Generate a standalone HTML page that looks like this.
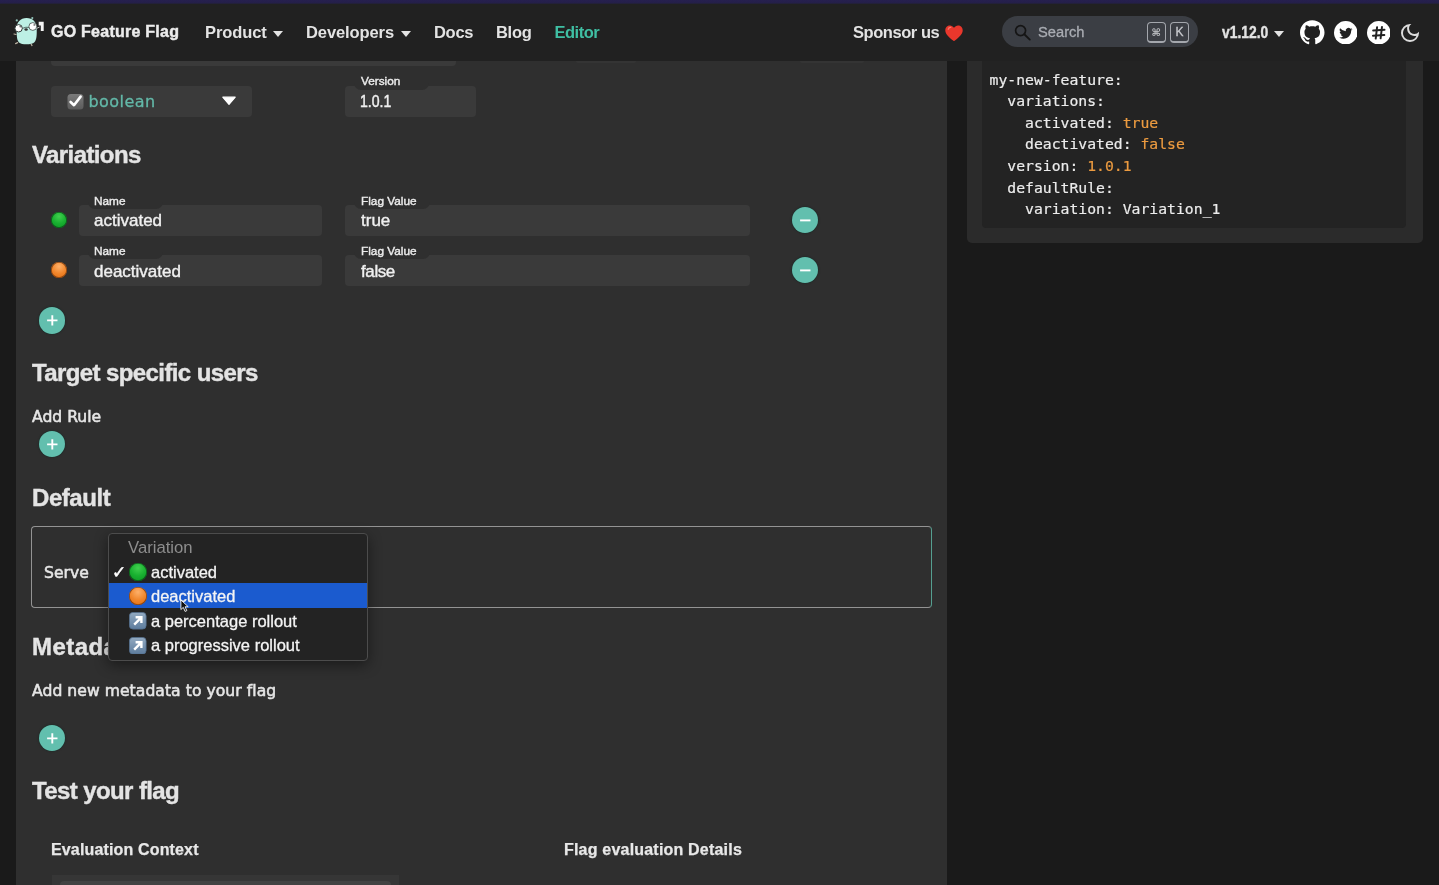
<!DOCTYPE html>
<html lang="en">
<head>
<meta charset="utf-8">
<title>GO Feature Flag - Editor</title>
<style>
*{box-sizing:border-box;margin:0;padding:0}
html,body{width:1439px;height:885px;overflow:hidden;background:#1b1b1b}
body{position:relative;font-family:"Liberation Sans",sans-serif;color:#e6e6e6}
.t{position:absolute;white-space:nowrap;line-height:1;transform:translateZ(0)}
.abs{position:absolute}
/* top strip + navbar */
#strip{left:0;top:0;width:1439px;height:4px;background:linear-gradient(#26204e 0,#251f4b 60%,#222132 100%);z-index:2}
#nav{left:0;top:3px;width:1439px;height:58px;background:#212121}
.navlink{font-weight:bold;font-size:16.5px;color:#e3e3e3;letter-spacing:-0.1px}
.caret{position:absolute;width:0;height:0;border-left:5.5px solid transparent;border-right:5.5px solid transparent;border-top:6px solid #e3e3e3}
/* main */
#gutter{left:0;top:61px;width:16px;height:824px;background:#1a1a1a}
#panel{left:16px;top:61px;width:931px;height:824px;background:#2f2f2f}
#right{left:947px;top:61px;width:492px;height:824px;background:#1a1a1a}
#card{left:967px;top:61px;width:456px;height:182px;background:#2b2b2b;border-radius:0 0 5px 5px}
#code{left:982px;top:61px;width:424px;height:167px;background:#232323;border-radius:0 0 4px 4px}
pre{position:absolute;left:989.5px;top:68.7px;-webkit-text-stroke:0.2px;font-family:"DejaVu Sans Mono","Liberation Mono",monospace;font-size:14.75px;line-height:21.6px;color:#ececec;transform:translateZ(0)}
pre b{font-weight:normal;color:#ec9b40}
.inp{position:absolute;background:#3a3a3a;border-radius:4px}
.lbl{font-size:11.8px;color:#ececec;-webkit-text-stroke:0.4px #ececec}
.notch{position:absolute;height:8px;background:#2f2f2f;border-radius:0 0 7px 7px}
.val{font-size:17px;color:#f0f0f0;-webkit-text-stroke:0.4px #f0f0f0}
h2.t{font-size:24px;font-weight:bold;color:#e4e4e4;letter-spacing:-0.6px;-webkit-text-stroke:0.4px #e4e4e4}
.pop{font-size:15.6px;color:#e6e6e6;-webkit-text-stroke:0.55px #e6e6e6;font-family:"DejaVu Sans",sans-serif}
.btn svg{position:absolute;left:0;top:0}
.btn{position:absolute;width:26.6px;height:26.6px;border-radius:50%;background:#62bfae;box-shadow:0 0 1.5px 0.5px rgba(10,40,35,.55)}
.btn i{position:absolute;left:8.1px;top:12.6px;width:10.4px;height:1.8px;background:#fff;border-radius:1px}
.btn i.v{left:12.4px;top:8.3px;width:1.8px;height:10.4px}
.dot{position:absolute;width:16px;height:16px;border-radius:50%}
.green{background:radial-gradient(circle at 50% 28%,#41cf4e 0%,#18b030 50%,#0e9425 100%);box-shadow:inset 0 0 0 0.8px rgba(8,70,20,.75)}
.orange{background:radial-gradient(circle at 50% 28%,#fdb06a 0%,#f0852a 52%,#de6c14 100%);box-shadow:inset 0 0 0 0.8px rgba(110,50,8,.75)}

.key{border:1.3px solid #a4a7ad;border-bottom-width:2.2px;border-radius:4px}

.ddi{font-size:16.5px;color:#f4f4f4;-webkit-text-stroke:0.3px #f4f4f4}
</style>
</head>
<body>
<div id="strip" class="abs"></div>
<div id="nav" class="abs"></div>

<!-- NAVBAR -->
<svg class="abs" id="logo" style="left:10px;top:14px" width="38" height="34" viewBox="10 14 38 34">
  <circle cx="16.8" cy="20.4" r="1.1" fill="#8fbfb6"/>
  <circle cx="32.3" cy="18.1" r="1.1" fill="#8fbfb6"/>
  <path d="M14 34 l2 0.5 M15.6 43.6 l2 -1 M32 45.6 l-0.9 -1.6" stroke="#b9b0a0" stroke-width="1.2" stroke-linecap="round"/>
  <path d="M16.6 29 C16.4 21.8 20.6 18 26.4 17.9 C32.6 17.8 36.6 21.6 36.7 28 C36.8 34 36.9 39.6 34.4 42.3 C31.6 45 21.6 45 19 42.4 C16.5 39.8 16.8 34.5 16.6 29Z" fill="#bdf0e5"/>
  <circle cx="18.6" cy="28.3" r="3.7" fill="#fff" stroke="#2f3b38" stroke-width="1"/>
  <circle cx="32.8" cy="26.5" r="3.9" fill="#fff" stroke="#3a4a46" stroke-width="0.8"/>
  <circle cx="20.3" cy="26.6" r="0.9" fill="#777"/>
  <circle cx="34.3" cy="24.9" r="0.9" fill="#777"/>
  <path d="M22.3 28.4 Q26 26.6 29 27.4" stroke="#3a4a46" stroke-width="0.8" fill="none"/>
  <ellipse cx="26.1" cy="29.5" rx="1.7" ry="1.2" fill="#333"/>
  <path d="M36.6 28.4 L39.6 27" stroke="#cfcfcf" stroke-width="0.9"/>
  <path d="M38.7 21.7 h5 v9.3 h-2.9 v-5.6 h-2.1z" fill="#f4f4f4"/>
</svg>
<div class="t" style="left:51px;top:24px;font-size:16px;font-weight:bold;color:#ececec;letter-spacing:0.25px;-webkit-text-stroke:0.45px #ececec">GO Feature Flag</div>
<div class="t navlink" style="left:205px;top:24px">Product</div><span class="caret" style="left:272.5px;top:31px"></span>
<div class="t navlink" style="left:306px;top:24px">Developers</div><span class="caret" style="left:400.5px;top:31px"></span>
<div class="t navlink" style="left:434px;top:24px;letter-spacing:-0.3px">Docs</div>
<div class="t navlink" style="left:496px;top:24px;letter-spacing:-0.3px">Blog</div>
<div class="t navlink" style="left:554.5px;top:24px;color:#3fbfa3;letter-spacing:-0.5px">Editor</div>
<div class="t navlink" style="left:853px;top:24px;letter-spacing:-0.45px">Sponsor us</div>
<svg class="abs" style="left:945px;top:24.5px" width="18" height="16.5" viewBox="0 0 18 16.5"><path d="M9 16.2 C3 11.5 0.3 8.6 0.3 5.2 C0.3 2.4 2.4 0.4 4.9 0.4 C6.6 0.4 8.1 1.3 9 2.8 C9.9 1.3 11.4 0.4 13.1 0.4 C15.6 0.4 17.7 2.4 17.7 5.2 C17.7 8.6 15 11.5 9 16.2Z" fill="#e9372c"/><path d="M3.2 4.4 C3.5 3 4.6 2.3 5.8 2.4" stroke="#f47a6e" stroke-width="1.1" fill="none" stroke-linecap="round"/></svg>
<div class="abs" id="search" style="left:1002px;top:16.2px;width:196px;height:31px;border-radius:16px;background:#3b3e44"></div>
<svg class="abs" style="left:1014px;top:24px" width="18" height="17" viewBox="0 0 18 17"><circle cx="6.6" cy="6.6" r="5" fill="none" stroke="#151515" stroke-width="1.7"/><path d="M10.3 10.3 L15.8 15.6" stroke="#151515" stroke-width="1.9" stroke-linecap="round"/></svg>
<div class="t" style="left:1038px;top:24.8px;font-size:14.7px;color:#a9acb2;-webkit-text-stroke:0.3px #a9acb2">Search</div>
<div class="abs key" style="left:1147px;top:21.7px;width:19px;height:21px"></div>
<div class="abs key" style="left:1170px;top:21.7px;width:18.5px;height:21px"></div>
<div class="t" style="left:1151.5px;top:27.5px;font-size:10px;font-weight:bold;color:#c4c6ca;font-family:'DejaVu Sans',sans-serif">&#8984;</div>
<div class="t" style="left:1175.5px;top:26.3px;font-size:12px;color:#c9cbcf;-webkit-text-stroke:0.3px #c9cbcf">K</div>
<div class="t navlink" style="left:1221.5px;top:24px;letter-spacing:0;-webkit-text-stroke:0.4px #e3e3e3;transform:translateZ(0) scaleX(0.84);transform-origin:0 0">v1.12.0</div><span class="caret" style="left:1273.5px;top:31px"></span>
<!-- github -->
<svg class="abs" style="left:1300px;top:20px" width="24.5" height="24.5" viewBox="0 0 24 24"><path fill="#fff" d="M12 .297c-6.63 0-12 5.373-12 12 0 5.303 3.438 9.8 8.205 11.385.6.113.82-.258.82-.577 0-.285-.01-1.04-.015-2.04-3.338.724-4.042-1.61-4.042-1.61C4.422 18.07 3.633 17.7 3.633 17.7c-1.087-.744.084-.729.084-.729 1.205.084 1.838 1.236 1.838 1.236 1.07 1.835 2.809 1.305 3.495.998.108-.776.417-1.305.76-1.605-2.665-.3-5.466-1.332-5.466-5.93 0-1.31.465-2.38 1.235-3.22-.135-.303-.54-1.523.105-3.176 0 0 1.005-.322 3.3 1.23.96-.267 1.98-.399 3-.405 1.02.006 2.04.138 3 .405 2.28-1.552 3.285-1.23 3.285-1.23.645 1.653.24 2.873.12 3.176.765.84 1.23 1.91 1.23 3.22 0 4.61-2.805 5.625-5.475 5.92.42.36.81 1.096.81 2.22 0 1.606-.015 2.896-.015 3.286 0 .315.21.69.825.57C20.565 22.092 24 17.592 24 12.297c0-6.627-5.373-12-12-12"/></svg>
<!-- twitter -->
<svg class="abs" style="left:1333.5px;top:20.5px" width="23.5" height="23.5" viewBox="0 0 24 24"><circle cx="12" cy="12" r="12" fill="#fff"/><path fill="#212121" d="M18.9 8.3c-.5.22-1.04.37-1.6.44.58-.35 1.02-.9 1.23-1.55-.54.32-1.14.55-1.77.68a2.79 2.79 0 0 0-4.76 2.55 7.93 7.93 0 0 1-5.76-2.92 2.8 2.8 0 0 0 .87 3.73c-.46-.01-.9-.14-1.27-.35v.04c0 1.35.96 2.48 2.24 2.74-.41.11-.85.13-1.26.05.35 1.11 1.39 1.92 2.61 1.94a5.6 5.6 0 0 1-4.14 1.16 7.9 7.9 0 0 0 4.28 1.25c5.14 0 7.95-4.26 7.95-7.95l-.01-.36c.55-.39 1.02-.88 1.39-1.45z"/></svg>
<!-- slack -->
<svg class="abs" style="left:1366.5px;top:20.5px" width="23.5" height="23.5" viewBox="0 0 24 24"><circle cx="12" cy="12" r="12" fill="#fff"/><g stroke="#212121" stroke-width="2" stroke-linecap="round"><path d="M10.3 6.3 L8.9 17.9"/><path d="M15.3 6.1 L13.9 17.7"/><path d="M6.3 9.6 L17.9 8.9"/><path d="M6.1 15.1 L17.7 14.4"/></g></svg>
<!-- moon -->
<svg class="abs" style="left:1398px;top:20.5px" width="24" height="24" viewBox="0 0 24 24"><path fill="#dcdcdc" d="M9.37 5.51A7.35 7.35 0 0 0 9.1 7.5c0 4.08 3.32 7.4 7.4 7.4.68 0 1.35-.09 1.99-.27A7.014 7.014 0 0 1 12 19c-3.86 0-7-3.14-7-7 0-2.93 1.81-5.45 4.37-6.49zM12 3a9 9 0 1 0 9 9c0-.46-.04-.92-.1-1.36a5.389 5.389 0 0 1-4.4 2.26 5.403 5.403 0 0 1-3.14-9.8c-.44-.06-.9-.1-1.36-.1z"/></svg>
<div id="gutter" class="abs"></div>
<div id="panel" class="abs"></div>
<div id="right" class="abs"></div>
<div id="card" class="abs"></div>
<div id="code" class="abs"></div>
<pre>my-new-feature:
  variations:
    activated: <b>true</b>
    deactivated: <b>false</b>
  version: <b>1.0.1</b>
  defaultRule:
    variation: Variation_1</pre>

<!-- LEFT FORM -->
<div class="inp" style="left:51px;top:61px;width:405px;height:5px;border-radius:0 0 4px 4px"></div>
<div class="inp" style="left:576px;top:61px;width:60px;height:2px;background:#343434;border-radius:0 0 3px 3px"></div>
<div class="inp" style="left:800px;top:61px;width:64px;height:2px;background:#343434;border-radius:0 0 3px 3px"></div>
<div class="inp" id="boolsel" style="left:51px;top:85.5px;width:200.5px;height:31px"></div>
<svg class="abs" style="left:67px;top:93px" width="17" height="17" viewBox="0 0 17 17"><defs><linearGradient id="cbg" x1="0" y1="0" x2="0" y2="1"><stop offset="0" stop-color="#7a7a7a"/><stop offset="1" stop-color="#5c5c5c"/></linearGradient></defs><rect x="0.5" y="1" width="16" height="15.5" rx="3.5" fill="url(#cbg)"/><path d="M3.6 9 L7 12.2 L13.6 3.6" stroke="#fff" stroke-width="2.6" fill="none" stroke-linecap="round" stroke-linejoin="round"/></svg>
<div class="t" style="left:88.5px;top:94px;font-size:16px;color:#63b8a8;font-family:'DejaVu Sans',sans-serif;letter-spacing:0.45px;-webkit-text-stroke:0.3px #63b8a8">boolean</div>
<svg class="abs" style="left:221px;top:96px" width="16" height="10" viewBox="0 0 16 10"><path d="M1.8 1.2 H14.2 L8 8.4Z" fill="#fff" stroke="#fff" stroke-width="1.2" stroke-linejoin="round"/></svg>
<div class="inp" style="left:344.5px;top:85.5px;width:131.5px;height:31px"></div>
<div class="notch" style="left:354px;top:81.5px;width:75px"></div><div class="t lbl" style="left:361.0px;top:75.8px">Version</div>
<div class="t val" style="left:360px;top:92.7px;font-size:16.4px;-webkit-text-stroke:0.45px #f0f0f0;transform:translateZ(0) scaleX(0.86);transform-origin:0 0">1.0.1</div>

<h2 class="t" style="left:32px;top:143px">Variations</h2>

<span class="dot green" style="left:51px;top:212px"></span>
<div class="inp" style="left:78.5px;top:205px;width:243.5px;height:31px"></div>
<div class="notch" style="left:87.5px;top:201px;width:75px"></div><div class="t lbl" style="left:94.0px;top:196.0px">Name</div>
<div class="t val" style="left:94px;top:211.5px">activated</div>
<div class="inp" style="left:344.5px;top:205px;width:405.5px;height:31px"></div>
<div class="notch" style="left:353.5px;top:201px;width:76.5px"></div><div class="t lbl" style="left:361.0px;top:196.0px">Flag Value</div>
<div class="t val" style="left:361px;top:211.5px">true</div>
<span class="btn" style="left:791.5px;top:206.5px"><svg width="26.6" height="26.6" viewBox="0 0 26.6 26.6"><path d="M8.1 13.4 H18.5" stroke="#fff" stroke-width="1.9" fill="none"/></svg></span>

<span class="dot orange" style="left:51px;top:261.5px"></span>
<div class="inp" style="left:78.5px;top:254.5px;width:243.5px;height:31px"></div>
<div class="notch" style="left:87.5px;top:250.5px;width:75px"></div><div class="t lbl" style="left:94.0px;top:245.5px">Name</div>
<div class="t val" style="left:94px;top:263px">deactivated</div>
<div class="inp" style="left:344.5px;top:254.5px;width:405.5px;height:31px"></div>
<div class="notch" style="left:353.5px;top:250.5px;width:76.5px"></div><div class="t lbl" style="left:361.0px;top:245.5px">Flag Value</div>
<div class="t val" style="left:361px;top:263px;letter-spacing:-0.4px">false</div>
<span class="btn" style="left:791.5px;top:256.5px"><svg width="26.6" height="26.6" viewBox="0 0 26.6 26.6"><path d="M8.1 13.4 H18.5" stroke="#fff" stroke-width="1.9" fill="none"/></svg></span>

<span class="btn" style="left:38.5px;top:307px"><svg width="26.6" height="26.6" viewBox="0 0 26.6 26.6"><path d="M8.1 13.4 H18.5 M13.3 8.2 V18.6" stroke="#fff" stroke-width="1.9" fill="none"/></svg></span>

<h2 class="t" style="left:32px;top:361px">Target specific users</h2>
<div class="t pop" style="left:32px;top:409.5px">Add Rule</div>
<span class="btn" style="left:38.5px;top:430.5px"><svg width="26.6" height="26.6" viewBox="0 0 26.6 26.6"><path d="M8.1 13.4 H18.5 M13.3 8.2 V18.6" stroke="#fff" stroke-width="1.9" fill="none"/></svg></span>

<h2 class="t" style="left:32px;top:485.7px;letter-spacing:-0.45px">Default</h2>
<div class="abs" id="defbox" style="left:31px;top:526px;width:901px;height:82px;border:1.3px solid #939393;border-right:1.5px solid #559f90;border-radius:4px"></div>
<div class="t pop" style="left:44px;top:565.5px">Serve</div>

<h2 class="t" style="left:32px;top:635px;letter-spacing:0.45px">Metadata</h2>
<div class="t pop" style="left:32px;top:684px;letter-spacing:0.05px">Add new metadata to your flag</div>
<span class="btn" style="left:38.5px;top:724.5px"><svg width="26.6" height="26.6" viewBox="0 0 26.6 26.6"><path d="M8.1 13.4 H18.5 M13.3 8.2 V18.6" stroke="#fff" stroke-width="1.9" fill="none"/></svg></span>

<h2 class="t" style="left:32px;top:779px">Test your flag</h2>
<div class="t" style="left:51px;top:841.8px;font-size:16px;font-weight:bold;color:#e8e8e8;-webkit-text-stroke:0.25px #e8e8e8;letter-spacing:0.15px">Evaluation Context</div>
<div class="t" style="left:564px;top:841.8px;font-size:16px;font-weight:bold;color:#e8e8e8;-webkit-text-stroke:0.25px #e8e8e8;letter-spacing:0.2px">Flag evaluation Details</div>
<div class="abs" style="left:51.5px;top:875px;width:347px;height:10px;background:#363636"></div>
<div class="abs" style="left:59.5px;top:881px;width:331px;height:4px;background:#424242;border-radius:4px 4px 0 0"></div>

<!-- DROPDOWN -->
<div class="abs" id="dd" style="left:108px;top:533px;width:259.5px;height:128px;background:#232323;border:1px solid #4c4c4c;border-radius:4px;box-shadow:0 4px 14px rgba(0,0,0,.45)"></div>
<div class="t" style="left:128px;top:540.2px;font-size:16.7px;color:#8d8d8d">Variation</div>
<div class="t" id="chk" style="left:112px;top:563.5px;font-size:17px;color:#fff;font-family:'DejaVu Sans',sans-serif;-webkit-text-stroke:0.5px #fff">&#10003;</div>
<span class="dot green" style="left:129px;top:563px;width:17.5px;height:17.5px"></span>
<div class="t ddi" style="left:151px;top:563.5px">activated</div>
<div class="abs" style="left:108.5px;top:583.3px;width:258.5px;height:24.7px;background:#1b5bcf"></div>
<span class="dot orange" style="left:129px;top:587.3px;width:17.5px;height:17.5px"></span>
<div class="t ddi" style="left:151px;top:588px">deactivated</div>
<svg class="abs" width="0" height="0"><defs><linearGradient id="arg" x1="0" y1="0" x2="0" y2="1"><stop offset="0" stop-color="#93aac1"/><stop offset="1" stop-color="#5d7c9d"/></linearGradient></defs></svg><svg class="abs" style="left:129px;top:612px" width="17.5" height="17.5" viewBox="0 0 17.5 17.5"><rect x="0.4" y="0.4" width="16.7" height="16.7" rx="3.6" fill="url(#arg)" stroke="#54708f" stroke-width="0.8"/><path d="M5.2 12.6 L11.6 6.2 M6.6 5.2 H12.4 V11" stroke="#fff" stroke-width="2.4" fill="none"/></svg>
<div class="t ddi" style="left:151px;top:612.5px">a percentage rollout</div>
<svg class="abs" style="left:129px;top:636.5px" width="17.5" height="17.5" viewBox="0 0 17.5 17.5"><rect x="0.4" y="0.4" width="16.7" height="16.7" rx="3.6" fill="url(#arg)" stroke="#54708f" stroke-width="0.8"/><path d="M5.2 12.6 L11.6 6.2 M6.6 5.2 H12.4 V11" stroke="#fff" stroke-width="2.4" fill="none"/></svg>
<div class="t ddi" style="left:151px;top:637px">a progressive rollout</div>
<svg class="abs" style="left:180.3px;top:599.3px" width="10.5" height="14" viewBox="0 0 12 16"><path d="M1 1 L1 12 L3.8 9.6 L5.8 14.2 L7.8 13.3 L5.8 8.9 L9.4 8.9 Z" fill="#111" stroke="#fff" stroke-width="1"/></svg>
</body>
</html>
